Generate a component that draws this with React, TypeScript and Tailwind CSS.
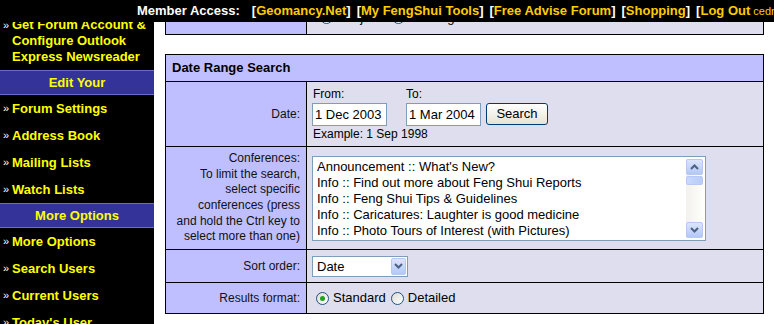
import React from "react";

const FONT = "font-['Liberation_Sans',Arial,Helvetica,sans-serif]";

const TOP_LINKS = ["Geomancy.Net", "My FengShui Tools", "Free Advise Forum", "Shopping"];

const EDIT_ITEMS = ["Forum Settings", "Address Book", "Mailing Lists", "Watch Lists"];
const MORE_ITEMS = ["More Options", "Search Users", "Current Users", "Today's User"];

const CONFERENCES = [
  "Announcement :: What's New?",
  "Info :: Find out more about Feng Shui Reports",
  "Info :: Feng Shui Tips & Guidelines",
  "Info :: Caricatures: Laughter is good medicine",
  "Info :: Photo Tours of Interest (with Pictures)",
];

function Chevron({ up }: { up?: boolean }) {
  return (
    <svg width="9" height="6" viewBox="0 0 9 6">
      <path
        d={up ? "M1 5 L4.5 1.5 L8 5" : "M1 1 L4.5 4.5 L8 1"}
        fill="none"
        stroke="#4d6185"
        strokeWidth="2"
      />
    </svg>
  );
}

function XpButton({ up, className = "" }: { up?: boolean; className?: string }) {
  return (
    <div
      className={`flex items-center justify-center rounded-[2px] border border-[#b7c9f3] bg-gradient-to-b from-[#dbe5fd] to-[#b4c8f6] ${className}`}
    >
      <Chevron up={up} />
    </div>
  );
}

function Radio({ checked, label }: { checked?: boolean; label: string }) {
  return (
    <label className="flex items-center">
      <span className="flex h-[13px] w-[13px] items-center justify-center rounded-full border border-[#1c5180] bg-gradient-to-br from-[#dcdcd5] to-white">
        {checked && <span className="h-[5px] w-[5px] rounded-full bg-[#21a121]" />}
      </span>
      <span className="ml-[4px]">{label}</span>
    </label>
  );
}

function SideItem({ children }: { children: React.ReactNode }) {
  return (
    <div className="flex h-[27px] items-center pl-[3px]">
      <span className="w-[9px] text-[11px] leading-none text-white">»</span>
      <span className="text-[13px] font-bold text-[#ffff00]">{children}</span>
    </div>
  );
}

function SideBand({ children }: { children: React.ReactNode }) {
  return (
    <div className="flex h-[25px] items-center justify-center border-y border-[#6a6ad0] bg-[#333399] text-[13px] font-bold text-[#ffff00]">
      {children}
    </div>
  );
}

function Sidebar() {
  return (
    <div className="w-[154px] shrink-0 bg-black pt-[12px]">
      <div className="flex py-[5px] pl-[3px] leading-[16px]">
        <span className="w-[9px] text-[11px] text-white">»</span>
        <span className="text-[13px] font-bold text-[#ffff00]">
          Get Forum Account &amp;
          <br />
          Configure Outlook
          <br />
          Express Newsreader
        </span>
      </div>
      <SideBand>Edit Your</SideBand>
      {EDIT_ITEMS.map((item) => (
        <SideItem key={item}>{item}</SideItem>
      ))}
      <SideBand>More Options</SideBand>
      {MORE_ITEMS.map((item) => (
        <SideItem key={item}>{item}</SideItem>
      ))}
    </div>
  );
}

function TopBar() {
  return (
    <div className="absolute left-0 right-0 top-0 flex h-[22px] items-center overflow-hidden whitespace-nowrap bg-black pl-[137px] text-[13px] font-bold">
      <span className="text-white">Member Access:</span>
      <span className="ml-[12px] flex gap-[6px]">
        {TOP_LINKS.map((link) => (
          <span key={link}>
            <span className="text-white">[</span>
            <span className="text-[#ffcc00]">{link}</span>
            <span className="text-white">]</span>
          </span>
        ))}
        <span>
          <span className="text-white">[</span>
          <span className="text-[#ffcc00]">Log Out</span>
          <span className="ml-[3px] text-[11px] font-normal text-[#ffcc00]">cedric</span>
        </span>
      </span>
    </div>
  );
}

const labelCell =
  "whitespace-nowrap border border-black bg-[#bfbfff] pr-[6px] text-right align-middle text-[12px] text-[#111]";
const valueCell = "border border-black bg-[#dedeee] pl-[5px] align-middle";

function Cols() {
  return (
    <colgroup>
      <col className="w-[141px]" />
      <col />
    </colgroup>
  );
}

function DateRangeTable() {
  return (
    <table className="w-[599px] table-fixed border-collapse border border-black text-[13px] text-black">
      <Cols />
      <tbody>
        <tr>
          <td colSpan={2} className="h-[27px] border border-black bg-[#bfbfff] pl-[6px] font-bold">
            Date Range Search
          </td>
        </tr>
        <tr>
          <td className={`${labelCell} h-[65px]`}>Date:</td>
          <td className={valueCell}>
            <div className="flex items-end">
              <div className="flex flex-col">
                <span className="pl-[1px] text-[12px] leading-[15px]">From:</span>
                <input
                  readOnly
                  value="1 Dec 2003"
                  className="mt-[1px] h-[23px] w-[75px] border border-[#7f9db9] bg-white px-[2px] text-[13px] outline-none"
                />
              </div>
              <div className="ml-[19px] flex flex-col">
                <span className="text-[12px] leading-[15px]">To:</span>
                <input
                  readOnly
                  value="1 Mar 2004"
                  className="mt-[1px] h-[23px] w-[75px] border border-[#7f9db9] bg-white px-[2px] text-[13px] outline-none"
                />
              </div>
              <button className="mb-[1px] ml-[5px] h-[22px] w-[62px] rounded-[3px] border border-[#003c74] bg-gradient-to-b from-white to-[#e6e3d6] text-[13px]">
                Search
              </button>
            </div>
            <div className="mt-[1px] pl-[1px] text-[12px] leading-[15px]">Example: 1 Sep 1998</div>
          </td>
        </tr>
        <tr>
          <td className={`${labelCell} h-[103px] leading-[15.6px]`}>
            Conferences:
            <br />
            To limit the search,
            <br />
            select specific
            <br />
            conferences (press
            <br />
            and hold the Ctrl key to
            <br />
            select more than one)
          </td>
          <td className={valueCell}>
            <div className="flex h-[85px] w-[394px] border border-[#7f9db9] bg-white p-[2px]">
              <div className="flex-1 overflow-hidden whitespace-nowrap pl-[2px] leading-[16px]">
                {CONFERENCES.map((c) => (
                  <div key={c}>{c}</div>
                ))}
              </div>
              <div className="flex w-[17px] flex-col bg-gradient-to-r from-[#f3f1ec] to-[#fefefb]">
                <XpButton up className="h-[16px]" />
                <div className="mt-[1px] h-[9px] rounded-[2px] border border-[#b7c9f3] bg-gradient-to-r from-[#c9d8fc] to-[#b9cdf8]" />
                <div className="flex-1" />
                <XpButton className="h-[16px]" />
              </div>
            </div>
          </td>
        </tr>
        <tr>
          <td className={`${labelCell} h-[33px]`}>Sort order:</td>
          <td className={valueCell}>
            <div className="flex h-[21px] w-[96px] border border-[#7f9db9] bg-white p-[1px]">
              <span className="flex-1 pl-[3px] leading-[18px]">Date</span>
              <XpButton className="w-[15px]" />
            </div>
          </td>
        </tr>
        <tr>
          <td className={`${labelCell} h-[31px]`}>Results format:</td>
          <td className={valueCell}>
            <div className="flex items-center gap-[5px] pl-[4px]">
              <Radio checked label="Standard" />
              <Radio label="Detailed" />
            </div>
          </td>
        </tr>
      </tbody>
    </table>
  );
}

function PreviousTable() {
  return (
    <table className="mt-[3px] w-[599px] table-fixed border-collapse border border-black text-[13px] text-black">
      <Cols />
      <tbody>
        <tr>
          <td className={`${labelCell} h-[31px]`} />
          <td className={`${valueCell} align-top`}>
            <div className="flex items-center gap-[5px] pl-[8px] pt-[4px]">
              <Radio checked label="Subjects" />
              <Radio label="Messages" />
            </div>
          </td>
        </tr>
      </tbody>
    </table>
  );
}

export default function App() {
  return (
    <div className={`relative flex h-[324px] w-[774px] overflow-hidden bg-white ${FONT}`}>
      <Sidebar />
      <main className="flex-1 bg-white pl-[11px]">
        <PreviousTable />
        <div className="h-[19px]" />
        <DateRangeTable />
      </main>
      <TopBar />
    </div>
  );
}
